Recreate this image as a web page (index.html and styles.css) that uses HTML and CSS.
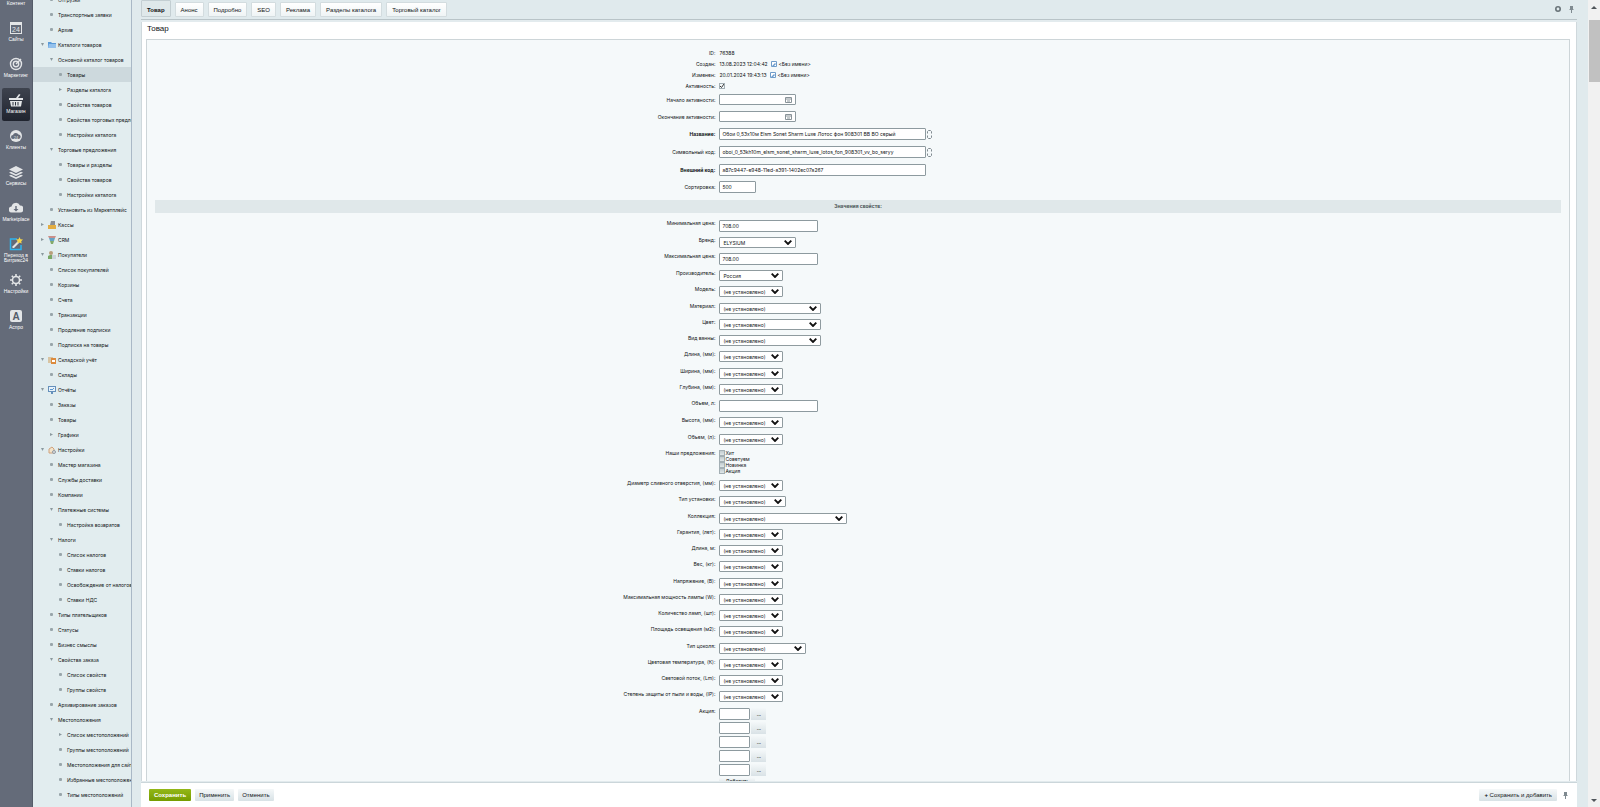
FILE: index.html
```html
<!DOCTYPE html>
<html lang="ru">
<head>
    <meta charset="utf-8">
    <title>Товар</title>
    <link rel="stylesheet" href="styles.css">
</head>

<body>
    <nav class="rail">
        <a href="#" class="rail-item"><svg viewBox="0 0 14 14"><path d="M2 2h10v10H2z"/></svg><span>Контент</span></a>
        <a href="#" class="rail-item"><svg viewBox="0 0 14 14"><path fill-rule="evenodd" d="M1 1h12v12H1zM2 4v8h10V4z"/><text x="7" y="11" text-anchor="middle">24</text></svg><span>Сайты</span></a>
        <a href="#" class="rail-item"><svg viewBox="0 0 14 14"><g fill="none" stroke="#e3e5e7" stroke-width="1.4"><circle cx="7" cy="7" r="5.5"/><circle cx="7" cy="7" r="2.7"/><path d="M7 7l5-5"/></g></svg><span>Маркетинг</span></a>
        <a href="#" class="rail-item active"><svg viewBox="0 0 14 14"><path fill-rule="evenodd" d="M0 5h7l3-4 1.500.8L9 5h5v2H0zM1 8h12l-1 5.500H2zM3.500 9v3.500h1V9zM6 9v3.500h1V9zM8.500 9v3.500h1V9z"/></svg><span>Магазин</span></a>
        <a href="#" class="rail-item"><svg viewBox="0 0 14 14"><circle cx="7" cy="7" r="6"/><path class="dark" d="M4 10a2 2 0 0 1 0-4 3 3 0 0 1 5.500-.5A2.300 2.300 0 0 1 10 10z"/><text x="7" y="9.500" text-anchor="middle" class="small">24</text></svg><span>Клиенты</span></a>
        <a href="#" class="rail-item"><svg viewBox="0 0 14 14"><path d="M7 1l7 3.500L7 8 0 4.500zM2 6.700l5 2.500 5-2.500 2 1L7 11 0 7.700zM2 9.700l5 2.500 5-2.500 2 1L7 14l-7-3.300z"/></svg><span>Сервисы</span></a>
        <a href="#" class="rail-item"><svg viewBox="0 0 14 14"><path d="M3 11.500a3 3 0 0 1-.5-6 4.500 4.500 0 0 1 8.500-1 3.500 3.500 0 0 1 0 7z"/><path class="dark" d="M6.300 5h1.400v3H9.500L7 10.500 4.500 8h1.800z"/></svg><span>Marketplace</span></a>
        <a href="#" class="rail-item"><svg viewBox="0 0 14 14"><path fill="none" stroke="#2fb4ee" stroke-width="1.500" d="M8 2H1.500v10.500H12V8"/><path d="M3.500 9.500L9 4l1.500 1.500L5 11H3.500z"/><path fill="#f8d648" d="M10.500 0l1 2.200 2.500.3-1.800 1.700.5 2.400-2.200-1.200-2.200 1.200.5-2.400L7 2.500l2.500-.3z"/></svg><span>Переход в<br>Битрикс24</span></a>
        <a href="#" class="rail-item"><svg viewBox="0 0 14 14"><g fill="none" stroke="#e3e5e7"><circle cx="7" cy="7" r="3.500" stroke-width="1.500"/><path stroke-width="1.600" d="M7 1v2M7 11v2M1 7h2M11 7h2M2.800 2.800l1.400 1.400M9.800 9.800l1.400 1.400M2.800 11.200l1.400-1.400M9.800 4.200l1.400-1.400"/></g></svg><span>Настройки</span></a>
        <a href="#" class="rail-item"><svg viewBox="0 0 14 14"><rect x="1" y="1" width="12" height="12" rx="2"/><text x="7" y="10.500" text-anchor="middle" class="big">A</text></svg><span>Аспро</span></a>
    </nav>

    <aside class="sidebar">
        <ul class="menu">
            <li class="l2"><i class="dot"></i><a href="#">Отгрузки</a></li>
            <li class="l2"><i class="dot"></i><a href="#">Транспортные заявки</a></li>
            <li class="l2"><i class="dot"></i><a href="#">Архив</a></li>
            <li class="l1"><i class="down"></i><svg viewBox="0 0 8 8"><path fill="#5b9bd8" d="M0 1h3l1 1h4v5H0z"/><path fill="#94c1ec" d="M1 3h7v4H0z"/></svg><a href="#">Каталоги товаров</a></li>
            <li class="l2"><i class="down"></i><a href="#">Основной каталог товаров</a></li>
            <li class="l3 selected"><i class="dot"></i><a href="#">Товары</a></li>
            <li class="l3"><i class="right"></i><a href="#">Разделы каталога</a></li>
            <li class="l3"><i class="dot"></i><a href="#">Свойства товаров</a></li>
            <li class="l3"><i class="dot"></i><a href="#">Свойства торговых предложений</a></li>
            <li class="l3"><i class="dot"></i><a href="#">Настройки каталога</a></li>
            <li class="l2"><i class="down"></i><a href="#">Торговые предложения</a></li>
            <li class="l3"><i class="dot"></i><a href="#">Товары и разделы</a></li>
            <li class="l3"><i class="dot"></i><a href="#">Свойства товаров</a></li>
            <li class="l3"><i class="dot"></i><a href="#">Настройки каталога</a></li>
            <li class="l2"><i class="dot"></i><a href="#">Установить из Маркетплейс</a></li>
            <li class="l1"><i class="right"></i><svg viewBox="0 0 8 8"><path fill="#8a8f96" d="M3 0h4v4H2z"/><path fill="#e3ad42" d="M0 4h8v4H0z"/></svg><a href="#">Кассы</a></li>
            <li class="l1"><i class="right"></i><svg viewBox="0 0 8 8"><path fill="#c98f8a" d="M0 0h8L7 2H1z"/><path fill="#64a3c6" d="M1 2h6L6 5H2z"/><path fill="#83aa6a" d="M2 5h4L5 8H3z"/></svg><a href="#">CRM</a></li>
            <li class="l1"><i class="down"></i><svg viewBox="0 0 8 8"><circle cx="3" cy="2" r="2" fill="#b89e7b"/><path fill="#79a866" d="M0 8V5l2-1h2l2 1v3z"/><path fill="#cbd3da" d="M4 4h4v4H4z"/></svg><a href="#">Покупатели</a></li>
            <li class="l2"><i class="dot"></i><a href="#">Список покупателей</a></li>
            <li class="l2"><i class="dot"></i><a href="#">Корзины</a></li>
            <li class="l2"><i class="dot"></i><a href="#">Счета</a></li>
            <li class="l2"><i class="dot"></i><a href="#">Транзакции</a></li>
            <li class="l2"><i class="dot"></i><a href="#">Продление подписки</a></li>
            <li class="l2"><i class="dot"></i><a href="#">Подписка на товары</a></li>
            <li class="l1"><i class="down"></i><svg viewBox="0 0 8 8"><path fill="#d8c4a2" d="M0 1h5v6H0z"/><path fill="#dc8b3e" d="M3 2h5v6H3z"/><path fill="#fff" d="M4 4h3v2H4z"/></svg><a href="#">Складской учёт</a></li>
            <li class="l2"><i class="dot"></i><a href="#">Склады</a></li>
            <li class="l1"><i class="down"></i><svg viewBox="0 0 8 8"><path fill="#6590bb" d="M0 0h8v6H0zM3 6h2v2H3z"/><path fill="#e9f2fa" d="M1 1h6v4H1z"/><path fill="none" stroke="#5b98cf" d="M2 4l1-1 1 1 2-2"/></svg><a href="#">Отчёты</a></li>
            <li class="l2"><i class="dot"></i><a href="#">Заказы</a></li>
            <li class="l2"><i class="dot"></i><a href="#">Товары</a></li>
            <li class="l2"><i class="right"></i><a href="#">Графики</a></li>
            <li class="l1"><i class="down"></i><svg viewBox="0 0 8 8"><path fill="#f2e3ca" stroke="#d0a27c" d="M1 3l3-2 2 2v4H1z"/><circle cx="6" cy="6" r="1.500" fill="#ddd" stroke="#939ba3"/></svg><a href="#">Настройки</a></li>
            <li class="l2"><i class="dot"></i><a href="#">Мастер магазина</a></li>
            <li class="l2"><i class="dot"></i><a href="#">Службы доставки</a></li>
            <li class="l2"><i class="dot"></i><a href="#">Компании</a></li>
            <li class="l2"><i class="down"></i><a href="#">Платежные системы</a></li>
            <li class="l3"><i class="dot"></i><a href="#">Настройка возвратов</a></li>
            <li class="l2"><i class="down"></i><a href="#">Налоги</a></li>
            <li class="l3"><i class="dot"></i><a href="#">Список налогов</a></li>
            <li class="l3"><i class="dot"></i><a href="#">Ставки налогов</a></li>
            <li class="l3"><i class="dot"></i><a href="#">Освобождение от налогов</a></li>
            <li class="l3"><i class="dot"></i><a href="#">Ставки НДС</a></li>
            <li class="l2"><i class="dot"></i><a href="#">Типы плательщиков</a></li>
            <li class="l2"><i class="dot"></i><a href="#">Статусы</a></li>
            <li class="l2"><i class="dot"></i><a href="#">Бизнес смыслы</a></li>
            <li class="l2"><i class="down"></i><a href="#">Свойства заказа</a></li>
            <li class="l3"><i class="dot"></i><a href="#">Список свойств</a></li>
            <li class="l3"><i class="dot"></i><a href="#">Группы свойств</a></li>
            <li class="l2"><i class="dot"></i><a href="#">Архивирование заказов</a></li>
            <li class="l2"><i class="down"></i><a href="#">Местоположения</a></li>
            <li class="l3"><i class="right"></i><a href="#">Список местоположений</a></li>
            <li class="l3"><i class="dot"></i><a href="#">Группы местоположений</a></li>
            <li class="l3"><i class="dot"></i><a href="#">Местоположения для сайтов</a></li>
            <li class="l3"><i class="dot"></i><a href="#">Избранные местоположения</a></li>
            <li class="l3"><i class="dot"></i><a href="#">Типы местоположений</a></li>
        </ul>
    </aside>

    <main class="work">
        <div class="tabs">
            <button class="tab current">Товар</button>
            <button class="tab">Анонс</button>
            <button class="tab">Подробно</button>
            <button class="tab">SEO</button>
            <button class="tab">Реклама</button>
            <button class="tab">Разделы каталога</button>
            <button class="tab">Торговый каталог</button>
            <div class="tab-tools">
                <button class="tool" aria-label="Настройки формы"><svg viewBox="0 0 8 8"><circle cx="4" cy="4" r="2.200" fill="none" stroke="#687378" stroke-width="1.600"/></svg></button>
                <button class="tool" aria-label="Закрепить вкладки"><svg viewBox="0 0 8 8"><path fill="#7f8a90" d="M3 1h3v3l1 1H2l1-1zM4 5h1v3H4z"/></svg></button>
            </div>
        </div>

        <form class="panel">
            <h1>Товар</h1>
            <div class="panel-body">
                <table class="fields general">
                    <tr class="text"><td>ID:</td><td>76388</td></tr>
                    <tr class="text"><td>Создан:</td><td>13.08.2023 12:04:42 <a href="#" class="user"><svg viewBox="0 0 6 6"><path fill="#fff" stroke="#6f9cc9" d="M.5.5h5v5h-5z"/><path fill="#6a9bce" d="M1 5l3-3 1 1-2 2z"/></svg></a> &lt;Без имени&gt;</td></tr>
                    <tr class="text"><td>Изменен:</td><td>20.01.2024 19:43:13 <a href="#" class="user"><svg viewBox="0 0 6 6"><path fill="#fff" stroke="#6f9cc9" d="M.5.5h5v5h-5z"/><path fill="#6a9bce" d="M1 5l3-3 1 1-2 2z"/></svg></a> &lt;Без имени&gt;</td></tr>
                    <tr class="text"><td><label for="active">Активность:</label></td><td><input type="checkbox" id="active" checked></td></tr>
                    <tr class="date"><td><label for="from">Начало активности:</label></td><td><input type="text" id="from" class="calendar"></td></tr>
                    <tr class="date"><td><label for="to">Окончание активности:</label></td><td><input type="text" id="to" class="calendar"></td></tr>
                    <tr class="name"><td><label for="name"><b>Название:</b></label></td><td><input type="text" id="name" class="long" value="Обои 0,53х10м Elsm Sonet Sharm Luxe Лотос фон 908301 ВВ ВО серый"><i class="link"></i></td></tr>
                    <tr class="name"><td><label for="code">Символьный код:</label></td><td><input type="text" id="code" class="long" value="oboi_0_53kh10m_elsm_sonet_sharm_luxe_lotos_fon_908301_vv_bo_seryy"><i class="link"></i></td></tr>
                    <tr class="date"><td><label for="xml"><b>Внешний код:</b></label></td><td><input type="text" id="xml" class="long" value="a87c9447-e948-11ed-a391-1402ec07a267"></td></tr>
                    <tr class="date"><td><label for="sort">Сортировка:</label></td><td><input type="text" id="sort" class="short" value="500"></td></tr>
                </table>

                <h2>Значения свойств:</h2>

                <table class="fields props">
                    <tr><td><label for="p1">Минимальная цена:</label></td><td><input type="text" id="p1" value="708.00"></td></tr>
                    <tr><td><label for="p2">Бренд:</label></td><td><select id="p2" class="w-brand"><option>ELYSIUM</option></select></td></tr>
                    <tr class="price"><td><label for="p3">Максимальная цена:</label></td><td><input type="text" id="p3" value="708.00"></td></tr>
                    <tr><td><label for="p4">Производитель:</label></td><td><select id="p4"><option>Россия</option></select></td></tr>
                    <tr><td><label for="p5">Модель:</label></td><td><select id="p5"><option>(не установлено)</option></select></td></tr>
                    <tr><td><label for="p6">Материал:</label></td><td><select id="p6" class="w-wide"><option>(не установлено)</option></select></td></tr>
                    <tr><td><label for="p7">Цвет:</label></td><td><select id="p7" class="w-wide"><option>(не установлено)</option></select></td></tr>
                    <tr><td><label for="p8">Вид ванны:</label></td><td><select id="p8" class="w-wide"><option>(не установлено)</option></select></td></tr>
                    <tr><td><label for="p9">Длина, (мм):</label></td><td><select id="p9"><option>(не установлено)</option></select></td></tr>
                    <tr><td><label for="p10">Ширина, (мм):</label></td><td><select id="p10"><option>(не установлено)</option></select></td></tr>
                    <tr><td><label for="p11">Глубина, (мм):</label></td><td><select id="p11"><option>(не установлено)</option></select></td></tr>
                    <tr class="price"><td><label for="p12">Объем, л:</label></td><td><input type="text" id="p12"></td></tr>
                    <tr><td><label for="p13">Высота, (мм):</label></td><td><select id="p13"><option>(не установлено)</option></select></td></tr>
                    <tr><td><label for="p14">Объем, (л):</label></td><td><select id="p14"><option>(не установлено)</option></select></td></tr>
                    <tr class="offers"><td>Наши предложения:</td><td>
                        <label><input type="checkbox">Хит</label>
                        <label><input type="checkbox">Советуем</label>
                        <label><input type="checkbox">Новинка</label>
                        <label><input type="checkbox">Акция</label>
                    </td></tr>
                    <tr><td><label for="p16">Диаметр сливного отверстия, (мм):</label></td><td><select id="p16"><option>(не установлено)</option></select></td></tr>
                    <tr><td><label for="p17">Тип установки:</label></td><td><select id="p17" class="w-mount"><option>(не установлено)</option></select></td></tr>
                    <tr><td><label for="p18">Коллекция:</label></td><td><select id="p18" class="w-collection"><option>(не установлено)</option></select></td></tr>
                    <tr><td><label for="p19">Гарантия, (лет):</label></td><td><select id="p19"><option>(не установлено)</option></select></td></tr>
                    <tr><td><label for="p20">Длина, м:</label></td><td><select id="p20"><option>(не установлено)</option></select></td></tr>
                    <tr><td><label for="p21">Вес, (кг):</label></td><td><select id="p21"><option>(не установлено)</option></select></td></tr>
                    <tr><td><label for="p22">Напряжение, (В):</label></td><td><select id="p22"><option>(не установлено)</option></select></td></tr>
                    <tr><td><label for="p23">Максимальная мощность лампы (W):</label></td><td><select id="p23"><option>(не установлено)</option></select></td></tr>
                    <tr><td><label for="p24">Количество ламп, (шт):</label></td><td><select id="p24"><option>(не установлено)</option></select></td></tr>
                    <tr><td><label for="p25">Площадь освещения (м2):</label></td><td><select id="p25"><option>(не установлено)</option></select></td></tr>
                    <tr><td><label for="p26">Тип цоколя:</label></td><td><select id="p26" class="w-base"><option>(не установлено)</option></select></td></tr>
                    <tr><td><label for="p27">Цветовая температура, (К):</label></td><td><select id="p27"><option>(не установлено)</option></select></td></tr>
                    <tr><td><label for="p28">Световой поток, (Lm):</label></td><td><select id="p28"><option>(не установлено)</option></select></td></tr>
                    <tr><td><label for="p29">Степень защиты от пыли и воды, (IP):</label></td><td><select id="p29"><option>(не установлено)</option></select></td></tr>
                    <tr><td><label for="p30">Акция:</label></td><td>
                        <div class="pick"><input type="text" id="p30"><button type="button">...</button></div>
                        <div class="pick"><input type="text" aria-label="Акция 2"><button type="button">...</button></div>
                        <div class="pick"><input type="text" aria-label="Акция 3"><button type="button">...</button></div>
                        <div class="pick"><input type="text" aria-label="Акция 4"><button type="button">...</button></div>
                        <div class="pick"><input type="text" aria-label="Акция 5"><button type="button">...</button></div>
                        <button type="button" class="btn add">Добавить</button>
                    </td></tr>
                </table>
            </div>
        </form>

        <footer class="actions">
            <button class="btn save">Сохранить</button>
            <button class="btn">Применить</button>
            <button class="btn">Отменить</button>
            <button class="btn save-add"><b>+</b> Сохранить и добавить</button>
            <button class="tool" aria-label="Закрепить панель"><svg viewBox="0 0 8 8"><path fill="#7f8a90" d="M3 1h3v3l1 1H2l1-1zM4 5h1v3H4z"/></svg></button>
        </footer>
    </main>

    <div class="scrollbar"><i class="up"></i><div class="thumb"></div><i class="bottom"></i></div>
</body>
</html>
```

FILE: styles.css
```css
* {
    box-sizing: border-box;
}
body {
    margin: 0;
    display: flex;
    height: 100vh;
    overflow: hidden;
    background: #e0eaed;
    color: #101315;
    font: 5px/8px Inter, "Open Sans", sans-serif;
}
a {
    color: inherit;
    text-decoration: none;
}
button, input, select {
    font: inherit;
    color: inherit;
    margin: 0;
}

/* left icon rail */
.rail {
    width: 33px;
    flex: none;
    margin-top: -20px;
    padding: 0 3px 0 2px;
    background: #646b79;
    box-shadow: inset -1px 0 #555c69;
    font-family: "Liberation Sans", Arial, sans-serif;
}
.rail-item {
    display: flex;
    flex-direction: column;
    align-items: center;
    height: 33px;
    margin-bottom: 3px;
    padding-top: 5px;
    border-radius: 2px;
    color: #fff;
    line-height: 5px;
    text-align: center;
}
.rail-item.active {
    background: linear-gradient(#3e434e, #20242f);
}
.rail-item svg {
    width: 14px;
    height: 14px;
    flex: none;
    margin-bottom: 2px;
    fill: #e3e5e7;
}
.rail-item .dark {
    fill: #646b79;
}
.rail-item text {
    font-size: 7px;
}
.rail-item text.small {
    font-size: 4px;
}
.rail-item text.big {
    font-size: 10px;
    font-weight: bold;
    fill: #555c69;
}

/* menu tree */
.sidebar {
    width: 99px;
    flex: none;
    overflow: hidden;
    background: #e2edef;
    border-right: 1px solid #a9b8c6;
}
.menu {
    list-style: none;
    margin: -8px 0 0;
    padding: 0;
}
.menu li {
    display: flex;
    align-items: center;
    height: 15px;
    white-space: nowrap;
}
.menu .l1 {
    padding-left: 8px;
}
.menu .l2 {
    padding-left: 17px;
}
.menu .l3 {
    padding-left: 26px;
}
.menu .selected {
    background: #cdd9dd;
}
.menu i {
    width: 3px;
    height: 3px;
    flex: none;
    margin-right: 5px;
    background: #8b999f;
}
.menu i.dot {
    border-radius: 1px;
    background: #98a5aa;
}
.menu .l1 i {
    margin-right: 4px;
}
.menu i.down {
    clip-path: polygon(0 0, 100% 0, 50% 100%);
}
.menu i.right {
    clip-path: polygon(0 0, 100% 50%, 0 100%);
}
.menu svg {
    width: 8px;
    height: 8px;
    flex: none;
    margin-right: 2px;
}

/* work area */
.work {
    flex: 1;
    min-width: 0;
    display: flex;
    flex-direction: column;
    padding: 0 11px 0 9px;
}
.tabs, .actions {
    font-family: "Liberation Sans", Arial, sans-serif;
    font-size: 6px;
}
.tabs {
    display: flex;
    align-items: flex-end;
    gap: 4px;
    height: 20px;
    flex: none;
    padding-bottom: 2px;
    border-bottom: 1px solid #b9c4c8;
}
.tab {
    height: 15px;
    padding: 0 5px;
    border: 1px solid #d3dcdf;
    border-radius: 1px;
    background: linear-gradient(#fff, #eff4f5);
}
.tab.current {
    height: 17px;
    padding-top: 2px;
    background: #dfe8ea;
    border-color: #c3ced2;
    font-weight: bold;
}
.tab-tools {
    display: flex;
    gap: 5px;
    margin-left: auto;
    padding: 0 2px 4px 0;
}
.tool {
    width: 8px;
    height: 8px;
    padding: 0;
    border: 0;
    background: none;
}
.tool svg {
    display: block;
    width: 8px;
    height: 8px;
}
.panel {
    flex: 1;
    min-height: 0;
    display: flex;
    flex-direction: column;
    overflow: hidden;
    padding: 0 7px 0 5px;
    background: #fff;
    box-shadow: inset 0 2px #e3ebee, inset 1px 0 #cfd8dc, inset -1px 0 #cfd8dc;
}
h1 {
    flex: none;
    margin: 0;
    padding: 4px 0 0 1px;
    height: 19px;
    font-family: "Liberation Sans", Arial, sans-serif;
    font-size: 8px;
    font-weight: normal;
    line-height: 10px;
}
.panel-body {
    flex: 1;
    min-height: 0;
    overflow: hidden;
    padding: 7px 8px 0;
    background: #f5f9fa;
    border: 1px solid #cdd5d8;
    border-bottom: 0;
}
h2 {
    margin: 5px 0;
    height: 13px;
    background: #e0e8ea;
    color: #4b5457;
    font-size: 5px;
    line-height: 13px;
    text-align: center;
}

/* field tables */
.fields {
    width: 100%;
    border-collapse: collapse;
}
.fields td {
    padding: 0 0 0 2px;
}
.fields td:first-child {
    width: 40%;
    padding-right: 2px;
    text-align: right;
}
.general .text {
    height: 11px;
}
.general .date {
    height: 17px;
}
.general .name {
    height: 18px;
}
.general input, .general .user, .link {
    vertical-align: middle;
}
.props td {
    height: 16px;
}
.fields.props td {
    padding-top: 2px;
    vertical-align: top;
}
.props tr:nth-child(4n+1) td, .props .price td {
    height: 17px;
}
.fields.props td:first-child {
    padding-top: 1px;
}
.props .offers td {
    height: 30px;
}
input[type="text"] {
    display: inline-block;
    width: 99px;
    height: 12px;
    padding: 0 2px;
    border: 1px solid #8d9a9f;
    border-radius: 1px;
    background: #fff;
}
.props input[type="text"], select {
    display: block;
}
input[type="text"].long {
    width: 207px;
}
input[type="text"].short {
    width: 37px;
}
input[type="text"].calendar {
    width: 77px;
    height: 11px;
    background: #fff url('data:image/svg+xml,<svg xmlns="http://www.w3.org/2000/svg" viewBox="0 0 7 7"><path fill="none" stroke="%23889398" d="M.5 1.500h6v5h-6zM.5 3h6M2 5h3"/></svg>') no-repeat right 3px center / 7px 7px;
}
.link {
    display: inline-block;
    width: 5px;
    height: 9px;
    margin-left: 1px;
    background: url('data:image/svg+xml,<svg xmlns="http://www.w3.org/2000/svg" viewBox="0 0 5 9"><path fill="none" stroke="%23808b90" d="M.5 3.500V1.500l1-1h2l1 1v2M.5 5.500v2l1 1h2l1-1v-2"/></svg>') center / 5px 9px;
}
.user {
    display: inline-block;
    margin-left: 2px;
}
.user svg {
    display: block;
    width: 6px;
    height: 6px;
}
select {
    appearance: none;
    width: 64px;
    height: 11px;
    padding: 0 3px;
    border: 1px solid #8f9b9f;
    border-radius: 1px;
    background: #fff url('data:image/svg+xml,<svg xmlns="http://www.w3.org/2000/svg" viewBox="0 0 8 5"><path fill="none" stroke="%23111" stroke-width="1.900" d="M.7.7L4 4 7.300.7"/></svg>') no-repeat right 3px center / 8px 5px;
}
.w-mount {
    width: 67px;
}
.w-brand {
    width: 77px;
}
.w-base {
    width: 87px;
}
.w-wide {
    width: 102px;
}
.w-collection {
    width: 128px;
}
input[type="checkbox"] {
    appearance: none;
    width: 6px;
    height: 6px;
    border: 1px solid #a3afb4;
    background: linear-gradient(#c2ccd0, #dfe6e8);
}
input[type="checkbox"]:checked {
    background: url('data:image/svg+xml,<svg xmlns="http://www.w3.org/2000/svg" viewBox="0 0 4 4"><path fill="none" stroke="%23333" d="M0 2l1.500 1.500L4 0"/></svg>') center / 4px 4px;
}
.offers label {
    display: flex;
    align-items: center;
    height: 6px;
}
.pick {
    display: flex;
    gap: 1px;
    margin-bottom: 2px;
}
.pick input[type="text"] {
    width: 31px;
}
.pick button {
    width: 15px;
    height: 12px;
    padding: 0;
    border: 0;
    background: linear-gradient(#f4f8f9, #d9e2e6);
    line-height: 8px;
}

/* bottom buttons */
.actions {
    display: flex;
    align-items: center;
    gap: 4px;
    height: 25px;
    flex: none;
    padding: 0 8px;
    background: #fff;
    border-top: 1px solid #cbd6da;
    box-shadow: 0 -1px #e2eaed;
}
.btn {
    height: 12px;
    padding: 0 4px;
    border: 0;
    border-radius: 1px;
    background: linear-gradient(#f5f8f9, #d8e2e6);
    line-height: 12px;
}
.btn.save {
    padding: 0 5px;
    background: linear-gradient(#93b717, #759c00);
    color: #fff;
    font-weight: bold;
}
.btn.save-add {
    margin-left: auto;
    padding: 0 5px;
}
.btn.add {
    display: block;
    height: 6px;
    padding: 0 6px;
    line-height: 6px;
}

/* page scrollbar */
.scrollbar {
    width: 12px;
    flex: none;
    display: flex;
    flex-direction: column;
    align-items: center;
    padding: 6px 0 3px;
    background: #f1f1f1;
}
.scrollbar i {
    width: 6px;
    height: 3px;
    background: #50555a;
}
.scrollbar .up {
    clip-path: polygon(50% 0, 100% 100%, 0 100%);
}
.scrollbar .bottom {
    margin-top: auto;
    margin-bottom: 2px;
    clip-path: polygon(0 0, 100% 0, 50% 100%);
}
.thumb {
    width: 11px;
    height: 62px;
    margin-top: 11px;
    background: #c1c1c1;
}
```
